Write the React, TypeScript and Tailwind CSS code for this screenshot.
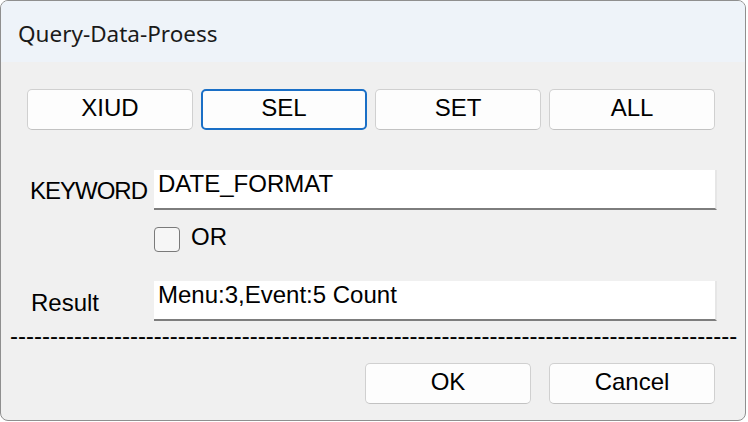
import React from "react";

const topButtons = ["XIUD", "SEL", "SET", "ALL"];

function DlgButton({ label, focused }: { label: string; focused?: boolean }) {
  return (
    <button
      className={`w-[166px] h-[41px] flex items-center justify-center pb-[4px] bg-[#fdfdfd] rounded-[5px] text-[24px] leading-[24px] text-black ${
        focused
          ? "border-2 border-[#1a6fc6]"
          : "border border-[#d0d0d0] border-b-[#c2c2c2]"
      }`}
    >
      {label}
    </button>
  );
}

export default function App() {
  const dashes = "-".repeat(91);

  return (
    <div className="w-[748px] h-[422px] bg-white">
      <div
        className="w-[746px] h-[421px] border border-[#8f8f8f] rounded-[8px] overflow-hidden flex flex-col bg-[#f0f0f0] text-black"
        style={{ fontFamily: '"Liberation Sans", Arial, sans-serif' }}
      >
        {/* ================= TITLE BAR ================= */}
        <div className="h-[61px] shrink-0 bg-[#eef3f9] flex items-center pl-[17px] pt-[4px]">
          <span
            className="text-[22.5px] leading-[24px] text-[#1a1a1a]"
            style={{ fontFamily: '"Noto Sans", sans-serif' }}
          >
            Query-Data-Proess
          </span>
        </div>

        {/* ================= BODY ================= */}
        <div className="flex flex-col pt-[27px] pl-[26px]">
          <div className="flex gap-[8px]">
            {topButtons.map((b) => (
              <DlgButton key={b} label={b} focused={b === "SEL"} />
            ))}
          </div>

          {/* KEYWORD */}
          <div className="flex items-center mt-[40px]">
            <span className="w-[127px] pl-[3px] text-[24px] leading-[24px] pt-[1px] tracking-[-1px]">
              KEYWORD
            </span>
            <div className="w-[563px] h-[40px] bg-white border-b-2 border-b-[#7d7d7d] border-r-2 border-r-[#e6e6e6] pl-[4px] pt-[2px] text-[24px] leading-[24px]">
              DATE_FORMAT
            </div>
          </div>

          {/* OR */}
          <div className="flex items-center mt-[15px] pl-[127px]">
            <div className="w-[26px] h-[25px] rounded-[4px] border-[1.5px] border-[#7a7a7a] bg-[#f6f6f6]" />
            <span className="ml-[11px] text-[24px] leading-[24px] pb-[4px]">OR</span>
          </div>

          {/* Result */}
          <div className="flex items-center mt-[28px]">
            <span className="w-[127px] pl-[4px] text-[24px] leading-[24px] pt-[3px]">
              Result
            </span>
            <div className="w-[563px] h-[40px] bg-white border-b-2 border-b-[#7d7d7d] border-r-2 border-r-[#e6e6e6] pl-[4px] pt-[2px] text-[24px] leading-[24px]">
              Menu:3,Event:5 Count
            </div>
          </div>
        </div>

        {/* dashed separator */}
        <div className="ml-[9px] mt-[3px] whitespace-nowrap text-[24px] leading-[24px]">
          {dashes}
        </div>

        {/* ================= FOOTER BUTTONS ================= */}
        <div className="flex justify-end gap-[18px] pr-[30px] mt-[15px]">
          <DlgButton label="OK" />
          <DlgButton label="Cancel" />
        </div>
      </div>
    </div>
  );
}
